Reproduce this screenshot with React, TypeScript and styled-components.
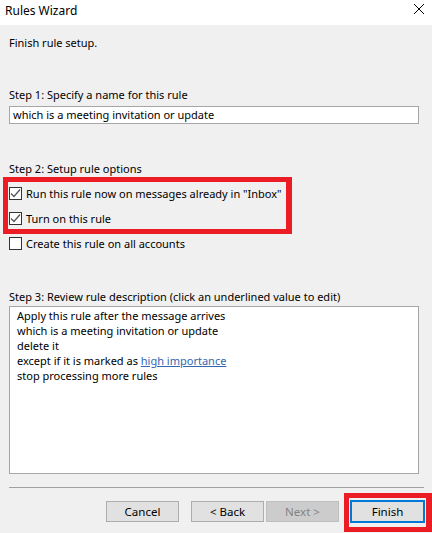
import React from "react";
import styled, { createGlobalStyle } from "styled-components";

const Global = createGlobalStyle`
  html, body { margin: 0; padding: 0; background: #f0f0f0; }
  body { font-family: "Noto Sans", "Open Sans", sans-serif; font-size: 11px; color: #000; }
  * { box-sizing: border-box; }
`;

const Window = styled.div`
  width: 432px;
  height: 533px;
  display: flex;
  flex-direction: column;
  background: #f0f0f0;
  overflow: hidden;
`;

const TitleBar = styled.div`
  height: 25px;
  background: #fff;
  display: flex;
  align-items: flex-start;
  justify-content: space-between;
  padding: 0 8px 0 5px;
`;

const Title = styled.span`
  font-size: 12px;
  line-height: 21px;
`;

const CloseIcon = styled.svg`
  margin-top: 4px;
`;

const Body = styled.div`
  flex: 1;
  display: flex;
  flex-direction: column;
  padding: 0 0 0 9px;
`;

const Text = styled.div<{ $mt?: number }>`
  line-height: 16px;
  margin-top: ${(p) => p.$mt ?? 0}px;
  white-space: nowrap;
`;

const Input = styled.div`
  margin-top: 3px;
  width: 410px;
  height: 18px;
  background: #fff;
  border: 1px solid #a6a6a6;
  padding: 0 3px;
  line-height: 16px;
  white-space: nowrap;
`;

const Highlight = styled.div`
  align-self: flex-start;
  margin-left: -6px;
  margin-top: 0;
  width: 289px;
  border: 5px solid #ec1c24;
  border-right-width: 6px;
  padding: 0 0 0 1px;
  display: flex;
  flex-direction: column;
  gap: 3px;
`;

const CheckRow = styled.label<{ $mt?: number }>`
  display: flex;
  align-items: center;
  gap: 4px;
  height: 22px;
  margin-top: ${(p) => p.$mt ?? 0}px;
  white-space: nowrap;
`;

const Box = styled.span`
  width: 13px;
  height: 13px;
  border: 1px solid #333;
  background: #fff;
  display: inline-flex;
  align-items: center;
  justify-content: center;
  flex: none;
`;

const Description = styled.div`
  margin-top: 1px;
  width: 410px;
  height: 168px;
  background: #fff;
  border: 1px solid #a6a6a6;
  padding: 1px 7px 0;
  display: flex;
  flex-direction: column;
`;

const DescLine = styled.div`
  line-height: 15px;
  white-space: nowrap;
`;

const Link = styled.span`
  color: #3467b0;
  text-decoration: underline;
`;

const Separator = styled.hr`
  margin: 13px 0 0 0;
  width: 415px;
  height: 0;
  border: none;
  border-top: 1px solid #a0a0a0;
`;

const Footer = styled.div`
  display: flex;
  align-items: flex-start;
  margin-top: 5px;
  padding-left: 97px;
`;

const Button = styled.button<{ $ml?: number; $disabled?: boolean }>`
  width: 74px;
  height: 21px;
  margin-top: 8px;
  margin-left: ${(p) => p.$ml ?? 0}px;
  font: inherit;
  font-size: 11.5px;
  line-height: 17px;
  padding: 0;
  background: ${(p) => (p.$disabled ? "#cccccc" : "#e1e1e1")};
  border: 1px solid ${(p) => (p.$disabled ? "#bfbfbf" : "#adadad")};
  color: ${(p) => (p.$disabled ? "#838383" : "#000")};
`;

const FinishFrame = styled.div`
  margin-left: 5px;
  border: 5px solid #ec1c24;
  border-right-width: 6px;
  padding: 2px 1px 4px 1px;
  height: 39px;
`;

const DefaultButton = styled.button`
  width: 75px;
  height: 23px;
  font: inherit;
  font-size: 11.5px;
  padding: 0;
  background: #e1e1e1;
  border: 2px solid #0078d7;
  color: #000;
`;

const Check = () => (
  <svg width="11" height="11" viewBox="0 0 11 11">
    <path d="M1 5.5 L4 8.5 L10 1.5" fill="none" stroke="#555" strokeWidth="1.3" />
  </svg>
);

const CheckOption = ({ checked, label, mt }: { checked: boolean; label: string; mt?: number }) => (
  <CheckRow $mt={mt}>
    <Box>{checked && <Check />}</Box>
    <span>{label}</span>
  </CheckRow>
);

export default function App() {
  return (
    <>
      <Global />
      <Window>
        <TitleBar>
          <Title>Rules Wizard</Title>
          <CloseIcon width="10" height="10" viewBox="0 0 10 10">
            <path d="M0 0 L10 10 M10 0 L0 10" stroke="#000" strokeWidth="1" />
          </CloseIcon>
        </TitleBar>
        <Body>
          <Text $mt={10}>Finish rule setup.</Text>
          <Text $mt={36}>Step 1: Specify a name for this rule</Text>
          <Input>which is a meeting invitation or update</Input>
          <Text $mt={37}>Step 2: Setup rule options</Text>
          <Highlight>
            <CheckOption checked label={'Run this rule now on messages already in "Inbox"'} />
            <CheckOption checked label="Turn on this rule" />
          </Highlight>
          <CheckOption checked={false} label="Create this rule on all accounts" mt={-2} />
          <Text $mt={35}>Step 3: Review rule description (click an underlined value to edit)</Text>
          <Description>
            <DescLine>Apply this rule after the message arrives</DescLine>
            <DescLine>which is a meeting invitation or update</DescLine>
            <DescLine>delete it</DescLine>
            <DescLine>
              except if it is marked as <Link>high importance</Link>
            </DescLine>
            <DescLine>stop processing more rules</DescLine>
          </Description>
          <Separator />
          <Footer>
            <Button>Cancel</Button>
            <Button $ml={12}>&lt; Back</Button>
            <Button $ml={2} $disabled>
              Next &gt;
            </Button>
            <FinishFrame>
              <DefaultButton>Finish</DefaultButton>
            </FinishFrame>
          </Footer>
        </Body>
      </Window>
    </>
  );
}
